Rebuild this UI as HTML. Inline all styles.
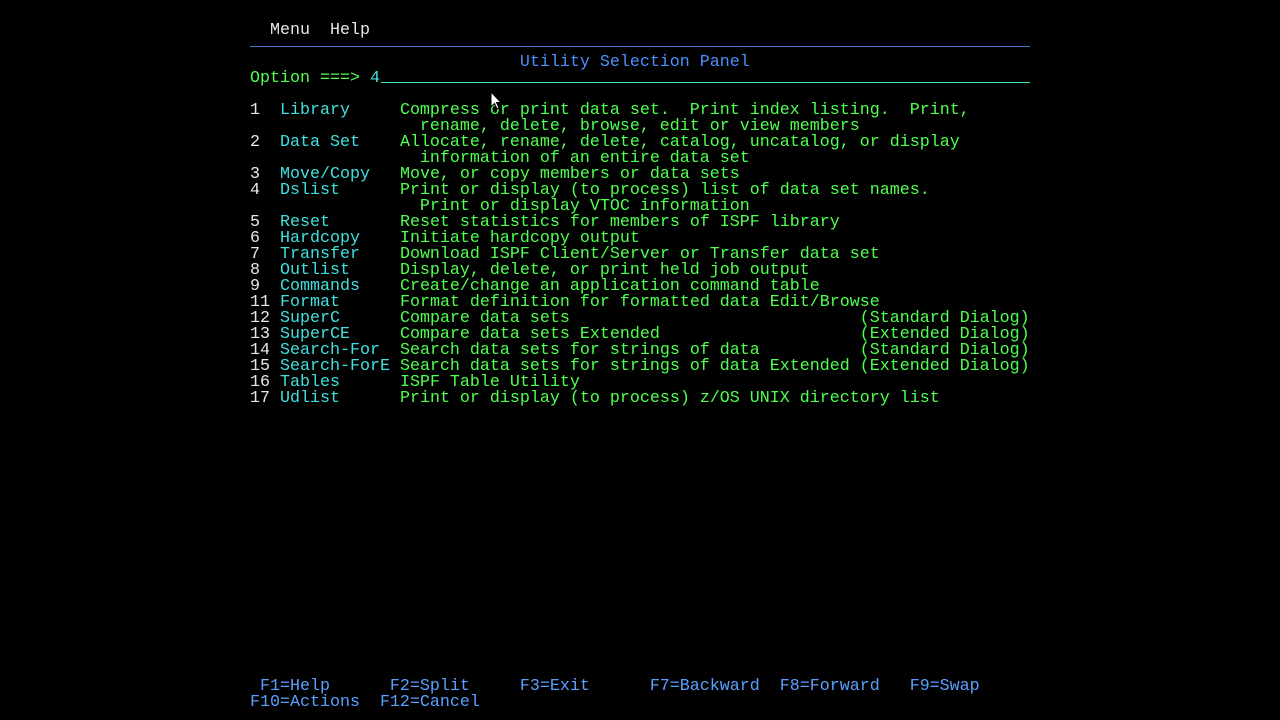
<!DOCTYPE html>
<html><head><meta charset="utf-8"><style>
html,body{margin:0;padding:0;background:#000;width:1280px;height:720px;overflow:hidden}
pre{position:absolute;left:250px;top:7px;margin:0;font-family:"Liberation Mono",monospace;font-size:16.67px;line-height:16px;color:#50ff50;white-space:pre}
.w{color:#e8e8e8}.t{color:#40e0e0}.g{color:#50ff50}.b{color:#4a90ff}.f{color:#5aa0ff}
.ln{position:absolute;height:1px}
</style></head><body>
<div class="ln" style="left:250px;top:46px;width:780px;background:#4a70d0"></div>
<div class="ln" style="left:381px;top:82px;width:649px;background:#40e0c0"></div>
<pre>

<span class="w">  Menu  Help</span>

<span class="b">                           Utility Selection Panel</span>
<span class="g">Option ===> </span><span class="t">4</span>

<span class="w">1</span>  <span class="t">Library</span>     Compress or print data set.  Print index listing.  Print,
                 rename, delete, browse, edit or view members
<span class="w">2</span>  <span class="t">Data Set</span>    Allocate, rename, delete, catalog, uncatalog, or display
                 information of an entire data set
<span class="w">3</span>  <span class="t">Move/Copy</span>   Move, or copy members or data sets
<span class="w">4</span>  <span class="t">Dslist</span>      Print or display (to process) list of data set names.
                 Print or display VTOC information
<span class="w">5</span>  <span class="t">Reset</span>       Reset statistics for members of ISPF library
<span class="w">6</span>  <span class="t">Hardcopy</span>    Initiate hardcopy output
<span class="w">7</span>  <span class="t">Transfer</span>    Download ISPF Client/Server or Transfer data set
<span class="w">8</span>  <span class="t">Outlist</span>     Display, delete, or print held job output
<span class="w">9</span>  <span class="t">Commands</span>    Create/change an application command table
<span class="w">11</span> <span class="t">Format</span>      Format definition for formatted data Edit/Browse
<span class="w">12</span> <span class="t">SuperC</span>      Compare data sets                             (Standard Dialog)
<span class="w">13</span> <span class="t">SuperCE</span>     Compare data sets Extended                    (Extended Dialog)
<span class="w">14</span> <span class="t">Search-For</span>  Search data sets for strings of data          (Standard Dialog)
<span class="w">15</span> <span class="t">Search-ForE</span> Search data sets for strings of data Extended (Extended Dialog)
<span class="w">16</span> <span class="t">Tables</span>      ISPF Table Utility
<span class="w">17</span> <span class="t">Udlist</span>      Print or display (to process) z/OS UNIX directory list

















<span class="f"> F1=Help      F2=Split     F3=Exit      F7=Backward  F8=Forward   F9=Swap</span>
<span class="f">F10=Actions  F12=Cancel</span></pre>
<svg style="position:absolute;left:490px;top:91px" width="14" height="20" viewBox="0 0 14 20"><path d="M1 1 L1 16 L4.5 12.5 L7 18 L9 17 L6.5 11.5 L11 11.5 Z" fill="#fff" stroke="#000" stroke-width="1"/></svg>
</body></html>
